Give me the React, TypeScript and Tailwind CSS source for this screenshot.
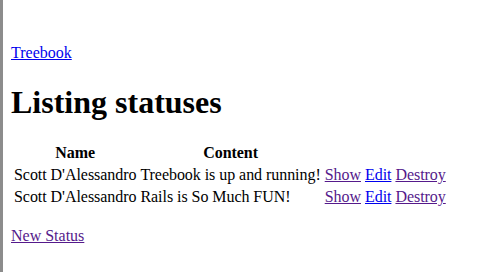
export default function App() {
  const statuses = [
    { name: "Scott D'Alessandro", content: "Treebook is up and running!" },
    { name: "Scott D'Alessandro", content: "Rails is So Much FUN!" },
  ]

  return (
    <div className="min-h-screen border-l-[3px] border-[#8c8c8c] bg-white px-2 pt-[44px] font-['Liberation_Serif',serif] text-[16px] leading-[18px] text-black">
      <p>
        <a href="#" className="text-[#0000ee] underline">
          Treebook
        </a>
      </p>

      <h1 className="mt-[22px] mb-[20px] text-[32px] leading-[37px] font-bold">Listing statuses</h1>

      <table className="border-separate border-spacing-[2px] tracking-[-0.05px]">
        <thead>
          <tr>
            <th className="p-px font-bold">Name</th>
            <th className="p-px font-bold">Content</th>
            <th className="p-px"></th>
            <th className="p-px"></th>
            <th className="p-px"></th>
          </tr>
        </thead>
        <tbody>
          {statuses.map((s, i) => (
            <tr key={i}>
              <td className="p-px">{s.name}</td>
              <td className="p-px">{s.content}</td>
              <td className="p-px">
                <a href="#" className="text-[#551a8b] underline">
                  Show
                </a>
              </td>
              <td className="p-px">
                <a href="#" className="text-[#0000ee] underline">
                  Edit
                </a>
              </td>
              <td className="p-px">
                <a href="#" className="text-[#551a8b] underline">
                  Destroy
                </a>
              </td>
            </tr>
          ))}
        </tbody>
      </table>

      <p className="mt-[18px]">
        <a href="#" className="text-[#551a8b] underline">
          New Status
        </a>
      </p>
    </div>
  )
}
